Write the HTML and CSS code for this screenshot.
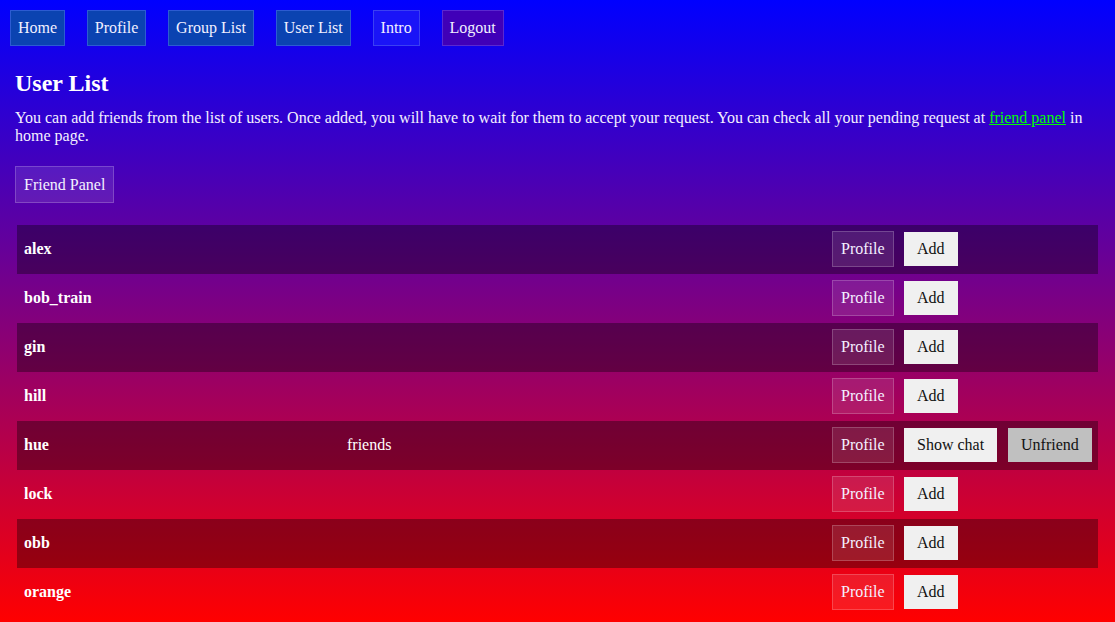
FILE: index.html
```html
<!DOCTYPE html>
<html lang="en">
<head>
<meta charset="utf-8">
<title>User List</title>
<link rel="stylesheet" href="styles.css">
</head>
<body>
<nav class="nav">
  <a class="nav-btn nav-main" href="#">Home</a>
  <a class="nav-btn nav-main" href="#">Profile</a>
  <a class="nav-btn nav-main" href="#">Group List</a>
  <a class="nav-btn nav-main" href="#">User List</a>
  <a class="nav-btn nav-intro" href="#">Intro</a>
  <a class="nav-btn nav-logout" href="#">Logout</a>
</nav>
<main class="content">
  <h2 class="title">User List</h2>
  <p class="desc">You can add friends from the list of users. Once added, you will have to wait for them to accept your request. You can check all your pending request at <a class="link" href="#">friend panel</a> in home page.</p>
  <div class="panel-row"><a class="ghost-btn" href="#">Friend Panel</a></div>
  <div class="user-list">
    <div class="user-row dark"><span class="name">alex</span><span class="status"></span><a class="ghost-btn" href="#">Profile</a><button class="act-btn">Add</button></div>
    <div class="user-row"><span class="name">bob_train</span><span class="status"></span><a class="ghost-btn" href="#">Profile</a><button class="act-btn">Add</button></div>
    <div class="user-row dark"><span class="name">gin</span><span class="status"></span><a class="ghost-btn" href="#">Profile</a><button class="act-btn">Add</button></div>
    <div class="user-row"><span class="name">hill</span><span class="status"></span><a class="ghost-btn" href="#">Profile</a><button class="act-btn">Add</button></div>
    <div class="user-row dark"><span class="name">hue</span><span class="status">friends</span><a class="ghost-btn" href="#">Profile</a><button class="act-btn">Show chat</button><button class="act-btn grey">Unfriend</button></div>
    <div class="user-row"><span class="name">lock</span><span class="status"></span><a class="ghost-btn" href="#">Profile</a><button class="act-btn">Add</button></div>
    <div class="user-row dark"><span class="name">obb</span><span class="status"></span><a class="ghost-btn" href="#">Profile</a><button class="act-btn">Add</button></div>
    <div class="user-row"><span class="name">orange</span><span class="status"></span><a class="ghost-btn" href="#">Profile</a><button class="act-btn">Add</button></div>
  </div>
</main>
</body>
</html>
```
FILE: styles.css
```css
html {
  background: linear-gradient(to bottom, #0000ff, #ff0000) fixed;
  min-height: 100%;
}
body {
  margin: 0;
  font-family: "Liberation Serif", "Times New Roman", serif;
  font-size: 16px;
  color: #ffffff;
}
.nav {
  display: flex;
  gap: 22px;
  padding: 10px 10px 0;
}
.nav-btn {
  display: block;
  padding: 8px 6.9px;
  border: 1px solid;
  color: #f2f0ff;
  text-decoration: none;
  line-height: normal;
}
.nav-main {
  background: #0b43b1;
  border-color: #2c5bd2;
}
.nav-intro {
  background: #1a14f7;
  border-color: #3b40f2;
}
.nav-logout {
  background: #4000b8;
  border-color: #5a28d0;
}
.content {
  padding: 0 15px;
}
.title {
  margin: 23.7px 0 12px;
  font-size: 24px;
  font-weight: bold;
  line-height: normal;
}
.desc {
  margin: 0;
  line-height: normal;
  color: #f4f0ff;
}
.link {
  color: #00ff00;
  text-decoration: underline;
}
.panel-row {
  display: flex;
  margin-top: 21.6px;
}
.ghost-btn {
  display: block;
  padding: 8px 8px;
  background: rgba(255, 255, 255, 0.1);
  border: 1px solid rgba(255, 255, 255, 0.2);
  color: #f4f0ff;
  text-decoration: none;
  line-height: normal;
}
.panel-row .ghost-btn {
  padding: 8.5px 8px;
}
.user-list {
  margin-top: 19.3px;
  padding: 2px;
  display: flex;
  flex-direction: column;
}
.user-row {
  display: grid;
  grid-template-columns: 312px 1fr 61px 93px 84px;
  column-gap: 11px;
  align-items: center;
  justify-items: start;
  height: 49px;
  padding: 0 6px 0 7px;
}
.user-row.dark {
  background: rgba(0, 0, 0, 0.35);
}
.name {
  font-weight: bold;
}
.act-btn {
  font-family: "Liberation Serif", "Times New Roman", serif;
  font-size: 16px;
  line-height: normal;
  padding: 8px 13px;
  border: none;
  background: #f0f0f0;
  color: #111;
  white-space: nowrap;
}
.act-btn.grey {
  background: #c0c0c0;
}
```
